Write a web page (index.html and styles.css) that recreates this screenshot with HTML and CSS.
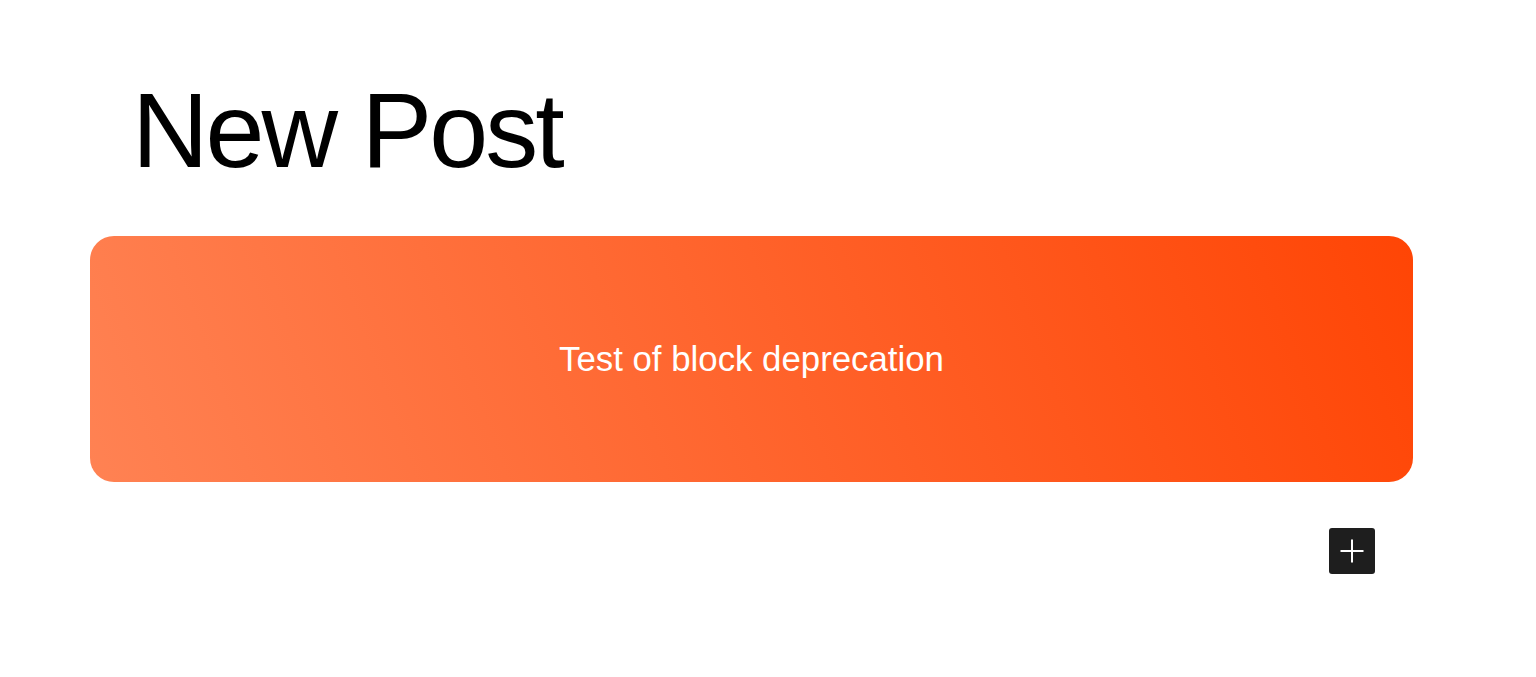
FILE: index.html
```html
<!DOCTYPE html>
<html lang="en">
<head>
<meta charset="utf-8">
<title>New Post</title>
<link rel="stylesheet" href="styles.css">
</head>
<body>
<div class="editor">
  <h1 class="post-title">New Post</h1>
  <div class="cover">
    <p class="cover-text">Test of block deprecation</p>
  </div>
  <div class="inserter-row">
    <button class="inserter" aria-label="Add block">
      <svg width="24" height="24" viewBox="0 0 24 24" aria-hidden="true">
        <path d="M12 0.5V23.5M0.5 12H23.5" stroke="#fff" stroke-width="2" fill="none"/>
      </svg>
    </button>
  </div>
</div>
</body>
</html>
```
FILE: styles.css
```css
html, body {
  margin: 0;
  padding: 0;
  background: #fff;
}
body {
  font-family: "Liberation Sans", Arial, sans-serif;
}
.editor {
  width: 1323px;
  margin-left: 90px;
  padding-top: 77px;
  display: flex;
  flex-direction: column;
}
.post-title {
  margin: 0 0 53px 0;
  padding-left: 42px;
  font-size: 106px;
  font-weight: 400;
  line-height: 1;
  letter-spacing: -3px;
  color: #000;
}
.cover {
  height: 246px;
  border-radius: 24px;
  background: linear-gradient(70deg, #ff8253, #ff4505);
  display: flex;
  align-items: center;
  justify-content: center;
}
.cover-text {
  margin: 0;
  color: #fff;
  font-size: 34.8px;
  line-height: 1;
}
.inserter-row {
  display: flex;
  justify-content: flex-end;
  padding-top: 46px;
  padding-right: 38px;
}
.inserter {
  width: 46px;
  height: 46px;
  border: 0;
  border-radius: 3px;
  background: #1e1e1e;
  display: flex;
  align-items: center;
  justify-content: center;
  padding: 0;
}
```
